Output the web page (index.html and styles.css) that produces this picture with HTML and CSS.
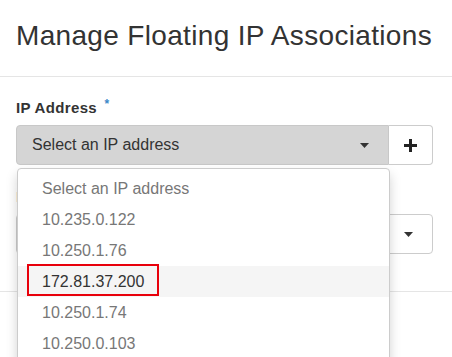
FILE: index.html
```html
<!DOCTYPE html>
<html>

<head>
    <link rel="stylesheet" href="styles.css">
</head>

<body>
    <div class="modal">
        <div class="modal-header">
            <h4 class="modal-title">Manage Floating IP Associations</h4>
        </div>
        <div class="modal-body">
            <div class="form-group">
                <label class="control-label">IP Address <span class="required">*</span></label>
                <div class="input-group">
                    <div class="select select-open">
                        <span class="select-text">Select an IP address</span>
                        <svg class="caret" width="9" height="5" viewBox="0 0 9 5"><polygon points="0,0 9,0 4.5,5" fill="#333"/></svg>
                    </div>
                    <button class="add-btn">
                        <svg width="13" height="13" viewBox="0 0 13 13"><rect x="5" y="0" width="3" height="13" fill="#222"/><rect x="0" y="5" width="13" height="3" fill="#222"/></svg>
                    </button>
                </div>
                <ul class="dropdown">
                    <li class="option">Select an IP address</li>
                    <li class="option">10.235.0.122</li>
                    <li class="option">10.250.1.76</li>
                    <li class="option option-active">172.81.37.200<span class="mark"></span></li>
                    <li class="option">10.250.1.74</li>
                    <li class="option">10.250.0.103</li>
                    <li class="option">10.250.0.98</li>
                </ul>
            </div>
            <div class="form-group">
                <label class="control-label label-hidden">Port</label>
                <div class="select select-white">
                    <span class="select-text"></span>
                    <svg class="caret" width="9" height="5" viewBox="0 0 9 5"><polygon points="0,0 9,0 4.5,5" fill="#333"/></svg>
                </div>
            </div>
        </div>
        <div class="modal-footer"></div>
    </div>
</body>

</html>
```

FILE: styles.css
```css
body {
    margin: 0;
    overflow: hidden;
    font-family: "Liberation Sans", Arial, sans-serif;
    color: #333;
    background: #fff;
}

.modal-header {
    padding: 21px 16px 25px;
    border-bottom: 1px solid #e5e5e5;
}

.modal-title {
    margin: 0;
    font-size: 28px;
    font-weight: normal;
    letter-spacing: 0.33px;
    line-height: 30px;
    color: #333;
}

.modal-body {
    padding: 21px 19px 37px 16px;
}

.form-group {
    position: relative;
    margin-bottom: 22px;
}

.form-group:last-child {
    margin-bottom: 0;
}

.control-label {
    display: block;
    font-size: 15px;
    font-weight: bold;
    letter-spacing: 0.35px;
    line-height: 20px;
    margin-bottom: 7px;
}

.label-hidden {
    color: #999;
}

.required {
    color: #3a87c8;
    font-size: 12px;
    vertical-align: top;
    position: relative;
    top: -4px;
    margin-left: 3px;
}

.input-group {
    display: flex;
    height: 40px;
}

.select {
    flex: 1;
    display: flex;
    align-items: center;
    justify-content: space-between;
    height: 40px;
    box-sizing: border-box;
    padding: 0 18px 0 15px;
    border: 1px solid #c8c8c8;
    border-radius: 4px;
    font-size: 16px;
}

.select-open {
    background: #d5d5d5;
    border-radius: 4px 0 0 4px;
    padding-right: 19px;
}

.select-white {
    background: #fff;
    border-color: #ccc;
    padding-right: 19px;
}

.add-btn {
    width: 44px;
    height: 40px;
    display: flex;
    align-items: center;
    justify-content: center;
    background: #fff;
    border: 1px solid #ccc;
    border-left: none;
    border-radius: 0 4px 4px 0;
    padding: 0;
}

.dropdown {
    position: absolute;
    left: 1px;
    top: 70px;
    width: 371px;
    margin: 0;
    padding: 4px 0;
    list-style: none;
    background: #fff;
    border: 1px solid #ccc;
    border-radius: 4px;
    box-shadow: 0 6px 12px rgba(0, 0, 0, .175);
    z-index: 10;
}

.option {
    position: relative;
    height: 31px;
    line-height: 32px;
    padding-left: 24px;
    font-size: 16px;
    color: #777;
}

.option-active {
    background: #f5f5f5;
    color: #333;
}

.mark {
    position: absolute;
    left: 9px;
    top: -2px;
    width: 128px;
    height: 28px;
    border: 2px solid #e8000b;
}

.modal-footer {
    border-top: 1px solid #e5e5e5;
    height: 80px;
}
```
